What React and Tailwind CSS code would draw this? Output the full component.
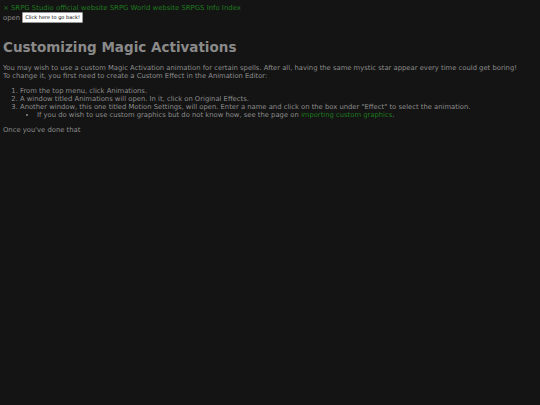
import React from 'react';

const App = () => {
    return (
        <div className="min-h-screen w-full bg-[#141414] text-[#8c8c8c] px-[3px] pt-[4px]" style={{ fontFamily: '"DejaVu Sans", Verdana, sans-serif' }}>
            <div className="text-[6.9px] leading-[8px] text-[#1f7a1f]">
                × SRPG Studio official website SRPG World website SRPGS Info Index
            </div>
            <div className="flex items-center gap-[2px] text-[6.9px] leading-[10px]">
                <span>open</span>
                <button className="bg-white text-black text-[5px] leading-[7px] px-[2px] py-[1px] rounded-[1px] border border-[#999]">
                    Click here to go back!
                </button>
            </div>

            <h1 className="mt-[16px] text-[13.5px] leading-[17px] font-bold text-[#8a8a8a]">
                Customizing Magic Activations
            </h1>

            <p className="mt-[8px] text-[6.8px] leading-[8px]">
                You may wish to use a custom Magic Activation animation for certain spells. After all, having the same mystic star appear every time could get boring!
                <br />
                To change it, you first need to create a Custom Effect in the Animation Editor:
            </p>

            <ol className="mt-[7px] list-decimal pl-[17px] text-[6.8px] leading-[8px]">
                <li>From the top menu, click Animations.</li>
                <li>A window titled Animations will open. In it, click on Original Effects.</li>
                <li>
                    Another window, this one titled Motion Settings, will open. Enter a name and click on the box under "Effect" to select the animation.
                    <ul className="list-disc pl-[17px]">
                        <li>
                            If you do wish to use custom graphics but do not know how, see the page on{' '}
                            <span className="text-[#1f7a1f]">importing custom graphics</span>.
                        </li>
                    </ul>
                </li>
            </ol>

            <p className="mt-[7px] text-[6.8px] leading-[8px]">Once you've done that</p>
        </div>
    );
};

export default App;
